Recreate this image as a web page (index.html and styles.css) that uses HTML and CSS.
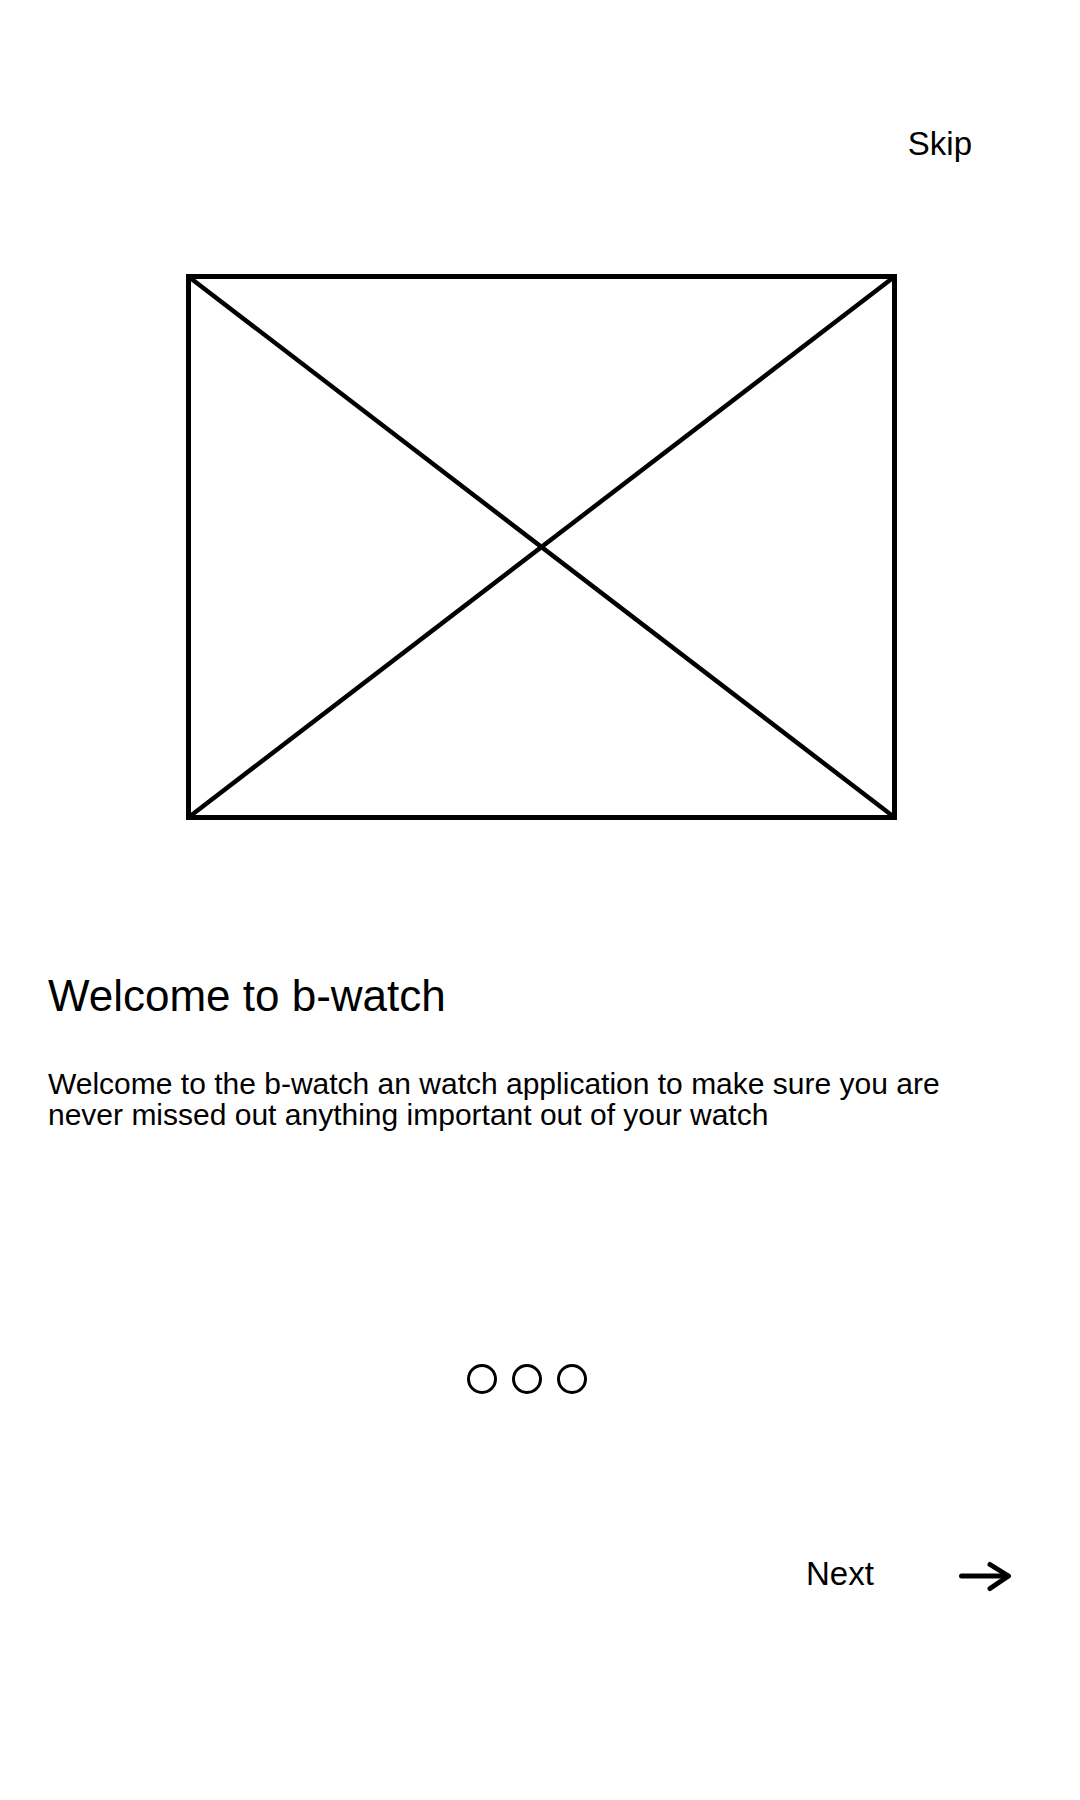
FILE: index.html
```html
<!DOCTYPE html>
<html lang="en">
<head>
<meta charset="utf-8">
<title>b-watch onboarding</title>
<link rel="stylesheet" href="styles.css">
</head>
<body>
<div class="screen">
  <div class="topbar">
    <span class="skip">Skip</span>
  </div>
  <div class="hero">
    <svg class="placeholder" width="711" height="546" viewBox="0 0 711 546" xmlns="http://www.w3.org/2000/svg">
      <rect x="2.5" y="2.5" width="706" height="541" fill="none" stroke="#000" stroke-width="5"/>
      <line x1="3" y1="3" x2="708" y2="543" stroke="#000" stroke-width="4.5"/>
      <line x1="708" y1="3" x2="3" y2="543" stroke="#000" stroke-width="4.5"/>
    </svg>
  </div>
  <h1 class="title">Welcome to b-watch</h1>
  <p class="desc">Welcome to the b-watch an watch application to make sure you are never missed out anything important out of your watch</p>
  <div class="dots">
    <span class="dot"></span>
    <span class="dot"></span>
    <span class="dot"></span>
  </div>
  <div class="nextrow">
    <span class="next">Next</span>
    <svg class="arrow" width="56" height="34" viewBox="0 0 56 34" xmlns="http://www.w3.org/2000/svg">
      <line x1="4.5" y1="17" x2="51" y2="17" stroke="#000" stroke-width="5" stroke-linecap="round"/>
      <polyline points="33,5.5 51.5,17 33,29.5" fill="none" stroke="#000" stroke-width="5" stroke-linecap="round" stroke-linejoin="round"/>
    </svg>
  </div>
</div>
</body>
</html>
```
FILE: styles.css
```css
html, body {
  margin: 0;
  padding: 0;
  background: #fff;
}
body {
  font-family: "Liberation Sans", Arial, sans-serif;
  color: #000;
}
.screen {
  width: 1080px;
  min-height: 1800px;
  box-sizing: border-box;
  padding: 0 48px;
  display: flex;
  flex-direction: column;
}
.topbar {
  display: flex;
  justify-content: flex-end;
  margin-top: 125px;
}
.skip {
  font-size: 33px;
  line-height: 38px;
  margin-right: 60px;
}
.hero {
  display: flex;
  margin-top: 111px;
  padding-left: 138px;
}
.placeholder {
  display: block;
}
.title {
  margin: 150px 0 0 0;
  font-weight: normal;
  font-size: 44px;
  line-height: 51px;
}
.desc {
  margin: 47px 0 0 0;
  font-size: 30px;
  line-height: 31px;
  max-width: 940px;
}
.dots {
  display: flex;
  gap: 15px;
  margin-top: 234px;
  padding-left: 419px;
}
.dot {
  width: 30px;
  height: 30px;
  box-sizing: border-box;
  border: 3px solid #000;
  border-radius: 50%;
}
.nextrow {
  display: flex;
  align-items: center;
  margin-top: 161px;
  padding-left: 758px;
  gap: 83px;
}
.next {
  font-size: 33px;
  line-height: 38px;
}
.arrow {
  display: block;
  margin-top: 4px;
}
```
